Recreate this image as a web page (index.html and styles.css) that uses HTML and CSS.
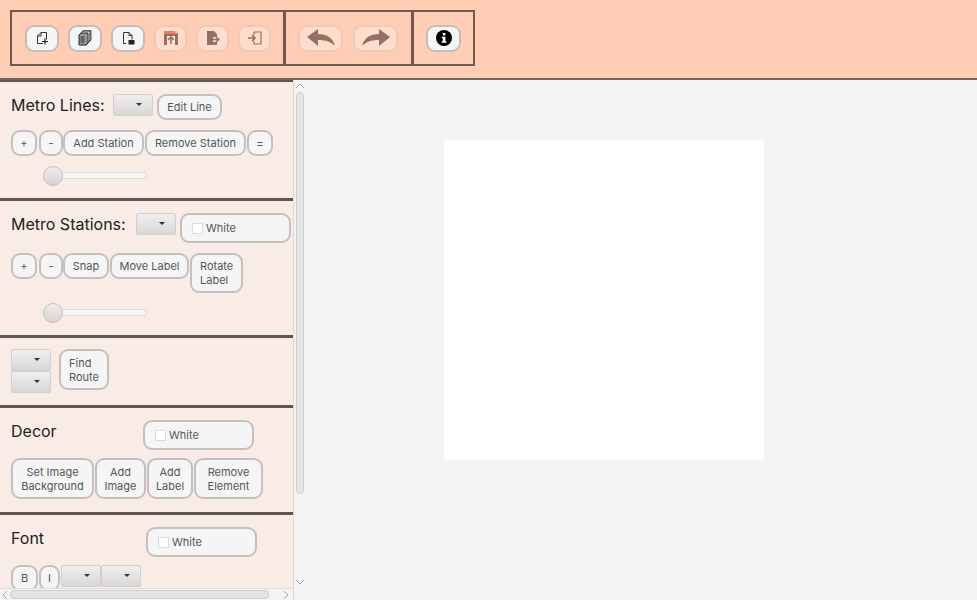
FILE: index.html
```html
<!DOCTYPE html>
<html lang="en">
<head>
  <meta charset="UTF-8">
  <title>Metro Map Maker</title>
  <link rel="stylesheet" href="styles.css">
</head>
<body>
  <div class="toolbar">
    <div class="group group-file">
      <button class="tool"><svg viewBox="0 0 14 14"><path d="M6 1.500h5.500v7 M8 12.500H2.500V5L6 1.500V5H2.500" fill="none" stroke="#333" stroke-width="1"/><path d="M7 10.500h6M10 7.500v6" stroke="#222" stroke-width="1.200"/></svg></button>
      <button class="tool"><svg class="big" viewBox="0 0 16 16"><path d="M2 5l2-2h7v10l-2 2H2z" fill="#999" stroke="#222"/><path d="M4 3l2-2h7v10l-2 2" fill="none" stroke="#222"/><path d="M6 1l2-1h6v10l-2 1" fill="none" stroke="#222" stroke-width=".7"/><rect x="3.500" y="6" width="4" height="7" fill="#666"/></svg></button>
      <button class="tool"><svg viewBox="0 0 14 14"><path d="M5 12.500H2.500v-11H8l3 3v4" fill="none" stroke="#333"/><path d="M8 1.500v3h3" fill="none" stroke="#333"/><rect x="7.500" y="9" width="6" height="4.500" fill="#222"/></svg></button>
      <button class="tool off"><svg class="big" viewBox="0 0 16 16"><rect x="1" y="1" width="14" height="14" fill="#6b4a3c"/><rect x="1" y="1" width="14" height="3" fill="#e0584a"/><rect x="12" y="1" width="3" height="2" fill="#f2c24e"/><rect x="4" y="6" width="8" height="9" fill="#ffe6da"/><path d="M8 7v7M5 10l3-3 3 3" stroke="#6b4a3c" stroke-width="1.600" fill="none"/></svg></button>
      <button class="tool off"><svg class="big" viewBox="0 0 16 16"><path d="M2 1h7l3 3v3H8v5h4v3H2z" fill="#6b4a3c"/><path d="M8 9.500h5M11 7l3 2.500-3 2.500" stroke="#6b4a3c" stroke-width="1.400" fill="none"/></svg></button>
      <button class="tool off"><svg class="big" viewBox="0 0 16 16"><path d="M7 2h7v12H7V11M7 5V2" fill="none" stroke="#6b4a3c" stroke-width="1.200"/><path d="M1 8h7M5 5l3 3-3 3" stroke="#6b4a3c" stroke-width="1.600" fill="none"/></svg></button>
    </div>
    <div class="group group-undo">
      <button class="tool wide off"><svg class="arrow" viewBox="0 0 28 18"><path d="M0 8l11-8v5c9 0 15 4 17 12-4-4-9-6-17-6v6z" fill="#6b4a3c"/></svg></button>
      <button class="tool wide off"><svg class="arrow" viewBox="0 0 28 18"><path d="M28 8L17 0v5C8 5 2 9 0 17c4-4 9-6 17-6v6z" fill="#6b4a3c"/></svg></button>
    </div>
    <div class="group group-info">
      <button class="tool tool-info"><svg class="big" viewBox="0 0 16 16"><circle cx="8" cy="8" r="8" fill="#000"/><rect x="6.800" y="3" width="2.600" height="2.400" fill="#fff"/><path d="M5.800 6.700h3.600v4.600h1v1.500H5.800v-1.500h1v-3.100h-1z" fill="#fff"/></svg></button>
    </div>
  </div>

  <div class="main">
    <div class="sidebar">
      <div class="panels">
        <div class="panel panel-lines">
          <div class="row">
            <span class="title title-lines">Metro Lines:</span>
            <div class="select sel-title"></div>
            <button class="btn edit-line">Edit Line</button>
          </div>
          <div class="row row-btns">
            <button class="btn b-plus">+</button>
            <button class="btn b-minus">-</button>
            <button class="btn b-add">Add Station</button>
            <button class="btn b-remove">Remove Station</button>
            <button class="btn b-eq">=</button>
          </div>
          <div class="slider"><span class="thumb"></span></div>
        </div>

        <div class="panel panel-stations">
          <div class="row">
            <span class="title title-stations">Metro Stations:</span>
            <div class="select sel-title"></div>
            <div class="color color-stations"><span class="check"></span>White</div>
          </div>
          <div class="row row-btns">
            <button class="btn b-plus">+</button>
            <button class="btn b-minus">-</button>
            <button class="btn b-snap">Snap</button>
            <button class="btn b-move">Move Label</button>
            <button class="btn b-rotate">Rotate<br>Label</button>
          </div>
          <div class="slider"><span class="thumb"></span></div>
        </div>

        <div class="panel panel-route">
          <div class="select-stack">
            <div class="select"></div>
            <div class="select"></div>
          </div>
          <button class="btn b-find">Find<br>Route</button>
        </div>

        <div class="panel panel-decor">
          <div class="row">
            <span class="title title-decor">Decor</span>
            <div class="color"><span class="check"></span>White</div>
          </div>
          <div class="row row-decor">
            <button class="btn b-image">Set Image<br>Background</button>
            <button class="btn b-addimg">Add<br>Image</button>
            <button class="btn b-addlbl">Add<br>Label</button>
            <button class="btn b-rem">Remove<br>Element</button>
          </div>
        </div>

        <div class="panel panel-font">
          <div class="row">
            <span class="title title-font">Font</span>
            <div class="color"><span class="check"></span>White</div>
          </div>
          <div class="row row-font">
            <button class="btn b-bold">B</button>
            <button class="btn b-ital">I</button>
            <div class="select"></div>
            <div class="select"></div>
          </div>
        </div>
      </div>

      <div class="vbar">
        <svg class="chev" viewBox="0 0 10 6"><path d="M1 5l4-4 4 4" fill="none" stroke="#aaa"/></svg>
        <div class="vtrack"><span class="vthumb"></span></div>
        <svg class="chev" viewBox="0 0 10 6"><path d="M1 1l4 4 4-4" fill="none" stroke="#aaa"/></svg>
      </div>
      <div class="hbar">
        <svg class="chev-h" viewBox="0 0 6 10"><path d="M5 1L1 5l4 4" fill="none" stroke="#aaa"/></svg>
        <span class="hthumb"></span>
        <svg class="chev-h" viewBox="0 0 6 10"><path d="M1 1l4 4-4 4" fill="none" stroke="#aaa"/></svg>
      </div>
    </div>

    <div class="workspace">
      <div class="canvas"></div>
    </div>
  </div>
</body>
</html>
```

FILE: styles.css
```css
* {
  box-sizing: border-box;
}
html, body {
  margin: 0;
  height: 600px;
  overflow: hidden;
}
body {
  font-family: Inter, Arial, sans-serif;
  font-size: 11px;
  color: #555;
  background: #f4f4f4;
}

/* top toolbar */
.toolbar {
  height: 80px;
  padding: 10px;
  display: flex;
  align-items: flex-start;
  background: #ffccb4;
  border-bottom: 2px solid #6e6460;
}
.group {
  height: 56px;
  display: flex;
  align-items: center;
  border: 2px solid #6e5a52;
  margin-right: -1px;
}
.group-file {
  width: 275px;
  padding-left: 13px;
  gap: 9px;
}
.group-undo {
  width: 129px;
  padding-left: 12px;
  gap: 10px;
}
.group-info {
  width: 63px;
  padding-left: 12px;
}
.tool {
  width: 34px;
  height: 27px;
  padding: 0;
  display: flex;
  align-items: center;
  justify-content: center;
  background: #f6f5f5;
  border: 2px solid #c4bdbb;
  border-radius: 9px;
}
.tool svg {
  width: 14px;
  height: 14px;
}
.tool svg.big {
  width: 16px;
  height: 16px;
}
.tool svg.arrow {
  width: 28px;
  height: 18px;
}
.tool.wide {
  width: 45px;
}
.tool-info {
  width: 35px;
}
.tool.off {
  width: 33px;
  background: #ffdccb;
  border-color: #efc9b7;
}
.tool.wide.off {
  width: 45px;
}
.tool.off svg {
  opacity: 0.72;
}

/* layout below the toolbar */
.main {
  display: flex;
  height: 520px;
}
.sidebar {
  width: 306px;
  display: grid;
  grid-template-columns: 293px 13px;
  grid-template-rows: 508px 12px;
  background: #f1efee;
  border-right: 1px solid #d0d0d0;
}
.panels {
  overflow: hidden;
  background: #f9ece6;
}
.panel {
  padding-left: 11px;
  border-top: 3px solid #5e5654;
}
.panel-lines {
  height: 118px;
  padding-top: 12px;
  border-top-width: 2px;
}
.panel-stations {
  height: 137px;
  padding-top: 12px;
}
.panel-route {
  height: 70px;
  padding-top: 11px;
  display: flex;
  align-items: flex-start;
}
.panel-decor {
  height: 107px;
  padding-top: 12px;
}
.panel-font {
  height: 90px;
  padding-top: 12px;
}
.row {
  display: flex;
  align-items: flex-start;
}
.title {
  flex: none;
  font-size: 16px;
  line-height: 22px;
  color: #222;
  white-space: nowrap;
}
.title-lines { width: 93px; }
.title-stations { width: 116px; }
.title-decor { width: 132px; }
.title-font { width: 135px; }

/* buttons and combo boxes */
.btn {
  height: 26px;
  padding: 0;
  font: inherit;
  line-height: 14px;
  color: #555;
  background: #f6f5f5;
  border: 2px solid #c4c0be;
  border-radius: 9px;
  white-space: nowrap;
}
.select {
  position: relative;
  width: 40px;
  height: 22px;
  background: linear-gradient(#f0eeee, #d9d7d6);
  border: 1px solid #d2cfce;
  border-radius: 2px;
  flex: none;
}
.select::after {
  content: "";
  position: absolute;
  right: 10px;
  top: 8px;
  border-left: 3.500px solid transparent;
  border-right: 3.500px solid transparent;
  border-top: 3.500px solid #333;
}
.sel-title {
  margin-left: 9px;
}
.edit-line {
  width: 65px;
  margin-left: 4px;
}
.row-btns {
  margin-top: 10px;
}
.b-plus { width: 26px; }
.b-minus { width: 24px; margin-left: 2px; }
.b-add { width: 81px; }
.b-remove { width: 101px; margin-left: 1px; }
.b-eq { width: 26px; margin-left: 1px; }
.b-snap { width: 46px; }
.b-move { width: 79px; margin-left: 1px; }
.b-rotate {
  width: 53px;
  height: 40px;
  margin-left: 1px;
  padding-left: 8px;
  text-align: left;
}
.b-find {
  width: 50px;
  height: 41px;
  margin-left: 8px;
  padding-left: 8px;
  text-align: left;
}

.select-stack {
  display: flex;
  flex-direction: column;
  gap: 0;
}
.color {
  width: 111px;
  height: 30px;
  display: flex;
  align-items: center;
  padding-left: 10px;
  background: #f6f5f5;
  border: 2px solid #c4c0be;
  border-radius: 9px;
}
.color-stations {
  margin-left: 4px;
}
.check {
  width: 11px;
  height: 11px;
  margin-right: 3px;
  background: #fff;
  border: 1px solid #dcdcdc;
}
.slider {
  position: relative;
  width: 104px;
  height: 7px;
  margin: 16px 0 0 32px;
  background: #f8f6f6;
  border: 1px solid #dcd8d6;
  border-radius: 3px;
}
.thumb {
  position: absolute;
  left: -1px;
  top: -7px;
  width: 20px;
  height: 20px;
  background: linear-gradient(#eeecec, #d6d4d3);
  border: 1px solid #c4c0be;
  border-radius: 50%;
}
.row-decor {
  margin-top: 8px;
  gap: 1px;
}
.row-decor .btn {
  height: 41px;
}
.b-image { width: 83px; }
.b-addimg { width: 51px; }
.b-addlbl { width: 46px; }
.b-rem { width: 69px; }
.row-font {
  margin-top: 8px;
}
.b-bold { width: 27px; margin-right: 1px; }
.b-ital { width: 21px; margin-right: 1px; }

/* scrollbars */
.vbar {
  grid-row: 1 / 3;
  display: flex;
  flex-direction: column;
  align-items: center;
  padding-top: 3px;
  background: #f3f3f3;
  border-left: 1px solid #d8d8d8;
}
.chev {
  width: 10px;
  height: 6px;
  flex: none;
}
.vtrack {
  flex: 1;
  width: 100%;
  padding: 3px 2px 0;
}
.vthumb {
  display: block;
  width: 8px;
  height: 402px;
  background: #e4e4e4;
  border: 1px solid #cfcfcf;
  border-radius: 4px;
}
.vbar .chev:last-child {
  margin-bottom: 15px;
}
.hbar {
  grid-row: 2;
  grid-column: 1;
  display: flex;
  align-items: center;
  padding-left: 2px;
  background: #f3f3f3;
  border-top: 1px solid #dedede;
}
.chev-h {
  width: 6px;
  height: 10px;
  flex: none;
}
.hthumb {
  width: 259px;
  height: 9px;
  margin: 0 14px 0 2px;
  background: #e4e4e4;
  border: 1px solid #cfcfcf;
  border-radius: 4px;
}

/* canvas area */
.workspace {
  flex: 1;
  padding: 60px 0 0 138px;
  background: #f4f4f4;
}
.canvas {
  width: 320px;
  height: 320px;
  background: #fff;
}
```
